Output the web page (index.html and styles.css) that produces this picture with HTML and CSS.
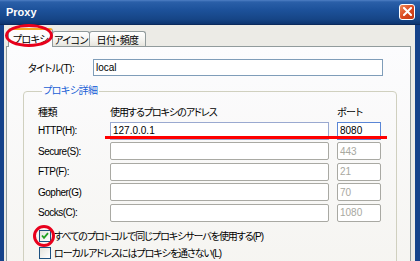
FILE: index.html
```html
<!DOCTYPE html>
<html lang="ja">
<head>
  <meta charset="UTF-8" />
  <title>Proxy</title>
  <link rel="stylesheet" href="styles.css">
</head>
<body>
  <div class="window">
    <div class="titlebar">
      <span class="title">Proxy</span>
      <span class="close">
        <svg width="9" height="9" viewBox="0 0 9 9"><path d="M1 1L8 8M8 1L1 8" stroke="#fff" stroke-width="2" stroke-linecap="square"/></svg>
      </span>
    </div>
    <div class="client">
      <div class="tabs">
        <div class="tab active tab-proxy">プロキシ</div>
        <div class="tab tab-icon">アイコン</div>
        <div class="tab tab-date">日付・頻度</div>
      </div>
      <div class="panel">
        <div class="title-row">
          <span class="title-label">タイトル(T):</span>
          <div class="field wide">local</div>
        </div>
        <fieldset class="group">
          <legend>プロキシ詳細</legend>
          <div class="grid">
            <div class="head">種類</div>
            <div class="head jp">使用するプロキシのアドレス</div>
            <div class="head">ポート</div>

            <div class="label">HTTP(H):</div>
            <div class="field">127.0.0.1</div>
            <div class="field focus">8080</div>

            <div class="label">Secure(S):</div>
            <div class="field off"></div>
            <div class="field off">443</div>

            <div class="label">FTP(F):</div>
            <div class="field off"></div>
            <div class="field off">21</div>

            <div class="label">Gopher(G)</div>
            <div class="field off"></div>
            <div class="field off">70</div>

            <div class="label">Socks(C):</div>
            <div class="field off"></div>
            <div class="field off">1080</div>
          </div>
          <div class="check">
            <span class="box">
              <svg width="8" height="8" viewBox="0 0 8 8"><path d="M1 3.5L3 5.8L7 1.2" fill="none" stroke="#21a121" stroke-width="1.8"/></svg>
            </span>
            <span class="jp">すべてのプロトコルで同じプロキシサーバを使用する(P)</span>
          </div>
          <div class="check">
            <span class="box"></span>
            <span class="jp">ローカルアドレスにはプロキシを通さない(L)</span>
          </div>
        </fieldset>
      </div>
    </div>
    <div class="mark mark-tab"></div>
    <div class="mark mark-check"></div>
    <div class="underline"></div>
  </div>
</body>
</html>
```

FILE: styles.css
```css
body {
  margin: 0;
  font-family: "Liberation Sans", "Noto Sans CJK JP", sans-serif;
  font-size: 10px;
  font-feature-settings: "palt" 1;
  font-variant-east-asian: proportional-width;
  letter-spacing: -0.5px;
  color: #000;
}
.jp {
  letter-spacing: -1.05px;
}
.window {
  position: relative;
  width: 420px;
  height: 261px;
  overflow: hidden;
  background: #15428a;
  display: flex;
  flex-direction: column;
}
.titlebar {
  flex-shrink: 0;
  height: 25px;
  box-sizing: border-box;
  display: flex;
  align-items: center;
  justify-content: space-between;
  padding: 0 5px 1px 6px;
  background: linear-gradient(#4f7fc4 0, #2a5fa8 2px, #1d529b 40%, #164586 80%, #0d3470 100%);
  border-bottom: 1px solid #0b2a5c;
}
.title {
  color: #fff;
  font-weight: bold;
  font-size: 11px;
  letter-spacing: 0;
}
.close {
  width: 14px;
  height: 14px;
  border: 1px solid #fff;
  border-radius: 3px;
  background: linear-gradient(135deg, #f08a5a, #d9471e 55%, #c23a14);
  display: flex;
  align-items: center;
  justify-content: center;
}
.client {
  flex: 1;
  min-height: 0;
  margin: 0 5px 0 4px;
  background: #ecebe6;
  padding: 3px 4px 0 2px;
}
.tabs {
  display: flex;
  align-items: flex-end;
  height: 18px;
  padding-left: 2px;
  position: relative;
  z-index: 1;
}
.tab {
  height: 15px;
  box-sizing: border-box;
  border: 1px solid #919b9c;
  border-bottom: none;
  border-radius: 3px 3px 0 0;
  background: linear-gradient(#fff, #f3f3ef 60%, #e6e5de);
  display: flex;
  align-items: center;
  justify-content: center;
  margin-left: -1px;
  letter-spacing: -0.6px;
}
.tab.active {
  height: 19px;
  margin-bottom: -1px;
  background: #fcfcfe;
  border-top: 2px solid #f5a623;
  margin-left: 0;
}
.tab-proxy {
  width: 45px;
}
.tab-icon {
  width: 38px;
}
.tab-date {
  width: 57px;
}
.panel {
  height: 260px;
  border: 1px solid #919b9c;
  background: linear-gradient(#fcfcfe, #f4f3ee);
  padding: 12px 0 0 16px;
}
.title-row {
  display: flex;
  align-items: center;
  padding-left: 5px;
}
.title-label {
  width: 65px;
}
.field {
  height: 18px;
  box-sizing: border-box;
  border: 1px solid #9aa9d0;
  background: #fff;
  padding-left: 2px;
  display: flex;
  align-items: center;
  letter-spacing: 0;
}
.field.wide {
  width: 290px;
  height: 17px;
  border-color: #7f9db9;
}
.field.focus {
  border-color: #5a86d6;
}
.field.off {
  border-color: #a9a9a3;
  border-radius: 2px;
  color: #a8a8a0;
}
.group {
  margin: 9px 0 0 0;
  width: 374px;
  box-sizing: border-box;
  border: 1px solid #d0d0bf;
  border-radius: 4px;
  padding: 6px 0 30px 14px;
}
.group legend {
  color: #1a5fd6;
  padding: 0 1px;
  margin-left: 4px;
  line-height: 12px;
}
.grid {
  display: grid;
  grid-template-columns: 64px 219px 44px;
  grid-template-rows: 16px repeat(5, 18px);
  column-gap: 8px;
  row-gap: 2.5px;
  align-items: center;
}
.check {
  display: flex;
  align-items: center;
  gap: 3px;
  height: 12px;
  margin-top: 8px;
  padding-left: 1px;
}
.check + .check {
  margin-top: 5px;
}
.box {
  width: 12px;
  height: 12px;
  box-sizing: border-box;
  border: 1px solid #1c5180;
  background: linear-gradient(135deg, #e3e3dc, #fff);
  display: flex;
  align-items: center;
  justify-content: center;
}
.mark {
  position: absolute;
  z-index: 2;
  border: 3px solid #e8001c;
  border-radius: 50%;
  box-sizing: border-box;
}
.mark-tab {
  left: 5px;
  top: 24px;
  width: 48px;
  height: 23px;
}
.mark-check {
  left: 33px;
  top: 225px;
  width: 22px;
  height: 22px;
}
.underline {
  position: absolute;
  z-index: 2;
  left: 105px;
  top: 136px;
  width: 282px;
  height: 3px;
  background: #f00;
}
```
